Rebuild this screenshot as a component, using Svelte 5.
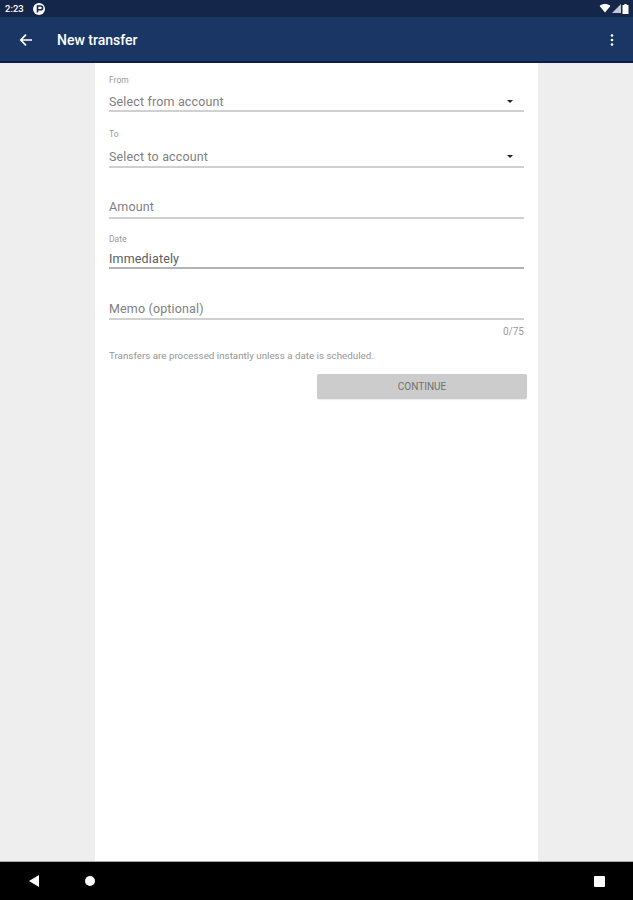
<script>
  const fields = [
    { cls: 'from', label: 'From', value: 'Select from account', select: true },
    { cls: 'to', label: 'To', value: 'Select to account', select: true },
    { cls: 'amount', label: '', value: 'Amount', select: false },
    { cls: 'date', label: 'Date', value: 'Immediately', select: false, dark: true },
    { cls: 'memo', label: '', value: 'Memo (optional)', select: false }
  ];
</script>

<div class="screen">
  <div class="status">
    <div class="status-left">
      <span class="time">2:23</span>
      <svg class="p-badge" viewBox="0 0 12 12" width="12" height="12">
        <circle cx="6" cy="6" r="6" fill="#fff" />
        <path d="M4.500 9.500V3h3.200a1.900 1.900 0 0 1 0 3.800H4.500" fill="none" stroke="#14264a" stroke-width="1.600" />
      </svg>
    </div>
    <div class="status-right">
      <svg viewBox="0 0 12 10" width="12" height="9"><path d="M0 2.200C3.400-.6 8.600-.6 12 2.200L6 9.500z" fill="#fff" /></svg>
      <svg viewBox="0 0 8 8" width="9" height="9"><path d="M8 0v8H0z" fill="#fff" opacity=".75" /></svg>
      <svg viewBox="0 0 6 10" width="7" height="10"><path d="M1.800 0h2.400v1H6v9H0V1h1.800z" fill="#fff" /></svg>
    </div>
  </div>

  <header class="appbar">
    <svg class="back" viewBox="0 0 14 14" width="14" height="14">
      <path d="M13 7H2M7 1.700 1.800 7 7 12.300" fill="none" stroke="#fff" stroke-width="1.700" />
    </svg>
    <h1>New transfer</h1>
    <svg class="more" viewBox="0 0 4 14" width="4" height="14">
      <circle cx="2" cy="2.500" r="1.300" fill="#fff" />
      <circle cx="2" cy="7" r="1.300" fill="#fff" />
      <circle cx="2" cy="11.500" r="1.300" fill="#fff" />
    </svg>
  </header>

  <div class="body">
    <main class="sheet">
      {#each fields as f}
        <div class="field {f.cls}">
          {#if f.label}<span class="label">{f.label}</span>{/if}
          <div class="control" class:dark={f.dark}>
            <span class="value">{f.value}</span>
            {#if f.select}<span class="caret"></span>{/if}
          </div>
        </div>
      {/each}
      <div class="counter">0/75</div>
      <p class="hint">Transfers are processed instantly unless a date is scheduled.</p>
      <div class="actions"><button type="button">CONTINUE</button></div>
    </main>
  </div>

  <nav class="navbar">
    <svg class="nav-back" viewBox="0 0 12 14" width="12" height="14"><path d="M11 1v12L1 7z" fill="#fff" /></svg>
    <span class="nav-home"></span>
    <span class="nav-recent"></span>
  </nav>
</div>

<style>
  :global(body) {
    margin: 0;
    background: #eeeeee;
  }
  .screen {
    width: 633px;
    height: 900px;
    display: flex;
    flex-direction: column;
    overflow: hidden;
    font-family: Roboto, "Liberation Sans", sans-serif;
  }
  .status {
    height: 17px;
    flex: none;
    background: #14264a;
    display: flex;
    align-items: center;
    justify-content: space-between;
    padding: 0 4px 0 5px;
    color: #fff;
  }
  .status-left {
    display: flex;
    align-items: center;
    gap: 9px;
  }
  .time {
    font-size: 9.500px;
    font-weight: 500;
    width: 19px;
  }
  .status-right {
    display: flex;
    align-items: center;
    gap: 1px;
  }
  .appbar {
    height: 42px;
    padding: 2px 19px 0;
    flex: none;
    background: #1a3665;
    border-bottom: 2px solid #0c1c4e;
    display: flex;
    align-items: center;
    color: #fff;
  }
  .appbar h1 {
    margin: 0 0 0 24px;
    font-size: 14px;
    font-weight: 500;
    flex: 1;
  }
  .body {
    flex: 1;
    display: flex;
    justify-content: center;
    min-height: 0;
  }
  .sheet {
    width: 415px;
    padding: 0 14px;
    background: #fff;
    display: flex;
    flex-direction: column;
  }
  .field {
    display: flex;
    flex-direction: column;
  }
  .from { margin-top: 12px; }
  .to { margin-top: 17px; }
  .amount { margin-top: 30px; }
  .date { margin-top: 15px; }
  .memo { margin-top: 31px; }
  .label {
    font-size: 8.500px;
    line-height: 10px;
    color: #9a9a9a;
    margin-bottom: 8px;
  }
  .to .label { margin-bottom: 9px; }
  .date .label { margin-bottom: 6px; }
  .control {
    height: 16px;
    display: flex;
    align-items: center;
    justify-content: space-between;
    border-bottom: 2px solid #d0d0d0;
    padding-bottom: 1px;
    box-sizing: content-box;
  }
  .to .control,
  .memo .control {
    padding-bottom: 2px;
  }
  .amount .control {
    padding-bottom: 3px;
  }
  .control.dark {
    border-bottom-color: #b4b4b4;
  }
  .value {
    font-size: 12.500px;
    letter-spacing: 0.15px;
    color: #808080;
  }
  .dark .value {
    color: #5c5c5c;
  }
  .caret {
    width: 0;
    height: 0;
    border-left: 3.500px solid transparent;
    border-right: 3.500px solid transparent;
    border-top: 3.500px solid #222;
    margin-right: 11px;
  }
  .counter {
    font-size: 10px;
    line-height: 12px;
    color: #9a9a9a;
    text-align: right;
    margin-top: 6px;
  }
  .hint {
    margin: 12px 0 0;
    font-size: 9.800px;
    line-height: 12px;
    color: #969696;
  }
  .actions {
    display: flex;
    justify-content: flex-end;
    margin: 12px -3px 0 0;
  }
  button {
    width: 210px;
    height: 25px;
    padding: 0;
    border: 0;
    border-radius: 2px;
    background: #cccccc;
    color: #707070;
    font: 400 10px Roboto, "Liberation Sans", sans-serif;
    box-shadow: 0 1px 1px rgba(0, 0, 0, 0.08);
  }
  .navbar {
    height: 38px;
    flex: none;
    background: #000;
    border-top: 1px solid #aaa;
    box-sizing: content-box;
    display: flex;
    align-items: center;
  }
  .nav-back {
    margin-left: 28px;
  }
  .nav-home {
    width: 10px;
    height: 10px;
    border-radius: 50%;
    background: #fff;
    margin-left: 45px;
  }
  .nav-recent {
    width: 11px;
    height: 11px;
    border-radius: 1px;
    background: #fff;
    margin-left: auto;
    margin-right: 28px;
  }
</style>
